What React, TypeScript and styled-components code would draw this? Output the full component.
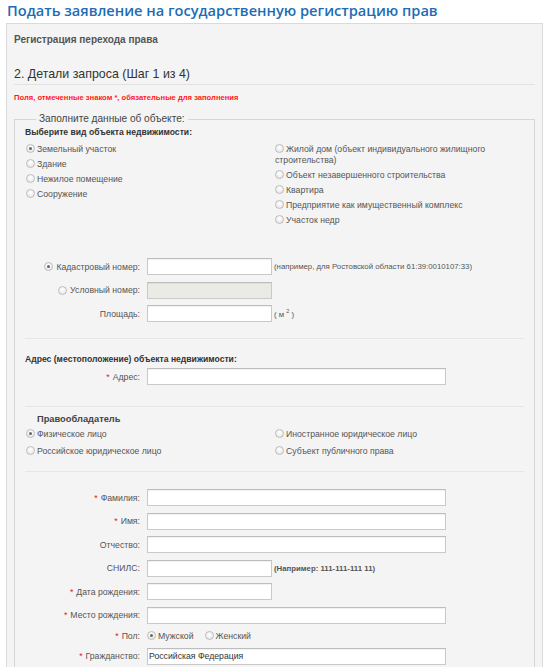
import React from 'react';
import styled, { createGlobalStyle } from 'styled-components';

const GlobalStyle = createGlobalStyle`
  html, body {
    margin: 0;
    padding: 0;
    background: #ffffff;
  }
  body {
    font-family: "Liberation Sans", Arial, sans-serif;
    color: #555;
  }
`;

const Page = styled.div`
  width: 550px;
  height: 667px;
  overflow: hidden;
`;

const Title = styled.h1`
  margin: 0;
  padding: 0 0 0 7px;
  height: 23px;
  font-family: "Open Sans", "Liberation Sans", sans-serif;
  font-weight: 600;
  font-size: 14.6px;
  line-height: 20px;
  color: #1d6cb5;
  white-space: nowrap;
`;

const Panel = styled.div`
  width: 521px;
  margin-left: 6px;
  padding: 9px 7px 0 7px;
  background: #f4f4f4;
  border: 1px solid #dadada;
`;

const PanelCaption = styled.div`
  font-size: 10px;
  font-weight: bold;
  line-height: 13px;
  color: #555;
`;

const StepTitle = styled.h2`
  margin: 20px 0 0;
  padding-bottom: 2px;
  font-size: 12.4px;
  font-weight: normal;
  line-height: 16px;
  color: #333;
  border-bottom: 1px solid #e2e2e2;
`;

const RequiredNote = styled.div`
  margin-top: 8px;
  font-size: 7.6px;
  font-weight: bold;
  line-height: 10px;
  color: #ff1a1a;
`;

const Fieldset = styled.fieldset`
  margin: 10px 0 0;
  padding: 0 10px 20px 10px;
  border: 1px solid #d6d6d6;
  min-width: 0;
`;

const Legend = styled.legend`
  margin-left: 11px;
  padding: 0 3px;
  font-size: 10.1px;
  line-height: 12px;
  color: #444;
`;

const SubHeading = styled.div<{ $top: number }>`
  margin-top: ${p => p.$top}px;
  font-size: 8.6px;
  font-weight: bold;
  line-height: 13px;
  color: #333;
`;

const OwnerHeading = styled.div`
  margin-top: 6px;
  padding-left: 12px;
  font-size: 9.3px;
  font-weight: bold;
  line-height: 13px;
  color: #444;
`;

const RadioGrid = styled.div<{ $step: number; $top: number }>`
  display: grid;
  grid-template-columns: 249px 1fr;
  margin-top: ${p => p.$top}px;
  padding-left: 1px;
  & > div {
    display: flex;
    flex-direction: column;
    gap: ${p => p.$step}px;
  }
`;

const RadioLabel = styled.label`
  display: block;
  font-size: 8.7px;
  line-height: 11px;
  color: #555;
`;

const RadioDot = styled.span<{ $checked?: boolean }>`
  display: inline-block;
  vertical-align: -1px;
  box-sizing: border-box;
  width: 9px;
  height: 9px;
  margin-right: 2px;
  border-radius: 50%;
  border: 1px solid #bcbcbc;
  background: radial-gradient(circle at 50% 35%, #ffffff 0%, #e2e2e2 100%);
  position: relative;
  &::after {
    content: '';
    display: ${p => (p.$checked ? 'block' : 'none')};
    position: absolute;
    left: 2px;
    top: 2px;
    width: 3px;
    height: 3px;
    border-radius: 50%;
    background: #666;
  }
`;

const FormRows = styled.div<{ $top: number }>`
  display: flex;
  flex-direction: column;
  gap: 6.5px;
  margin-top: ${p => p.$top}px;
`;

const Row = styled.div<{ $height?: number }>`
  display: grid;
  grid-template-columns: 115px auto 1fr;
  column-gap: 7px;
  align-items: center;
  height: ${p => p.$height ?? 17}px;
`;

const Label = styled.div`
  display: flex;
  justify-content: flex-end;
  align-items: center;
  font-size: 8.7px;
  color: #555;
  white-space: nowrap;
  & > span:first-child {
    margin-right: 3px;
  }
`;

const Star = styled.span`
  color: #e52424;
  margin-right: 3px;
`;

const Input = styled.input<{ $wide?: boolean }>`
  box-sizing: border-box;
  width: ${p => (p.$wide ? 299 : 125)}px;
  height: 17px;
  margin: 0;
  padding: 0 1px;
  border: 1px solid #c9c9c9;
  border-top-color: #bdbdbd;
  box-shadow: inset 0 1px 1px rgba(0, 0, 0, 0.06);
  background: #fff;
  font-family: "Liberation Sans", Arial, sans-serif;
  font-size: 8.7px;
  color: #333;
  outline: none;
  &:disabled {
    background: #ebebe6;
  }
`;

const Hint = styled.span<{ $bold?: boolean }>`
  margin-left: -5px;
  font-size: 7.8px;
  font-weight: ${p => (p.$bold ? 'bold' : 'normal')};
  color: #555;
  white-space: nowrap;
`;

const Sup = styled.sup`
  font-size: 5.5px;
`;

const Divider = styled.hr<{ $top: number }>`
  margin: ${p => p.$top}px 0 0 0;
  border: 0;
  border-top: 1px solid #e6e6e6;
`;

const InlineRadios = styled.div`
  display: flex;
  gap: 11px;
  font-size: 8.7px;
  color: #555;
`;

const InlineRadio = styled.span`
  display: inline-flex;
  align-items: center;
`;

const Radio = ({ checked, children }: { checked?: boolean; children: React.ReactNode }) => (
  <RadioLabel>
    <RadioDot $checked={checked} />
    {children}
  </RadioLabel>
);

const Field = ({
  label,
  required,
  wide,
  value,
  hint,
  boldHint,
  disabled,
  radio,
}: {
  label: string;
  required?: boolean;
  wide?: boolean;
  value?: string;
  hint?: React.ReactNode;
  boldHint?: boolean;
  disabled?: boolean;
  radio?: 'on' | 'off';
}) => (
  <Row>
    <Label>
      {radio && <RadioDot $checked={radio === 'on'} />}
      {required && <Star>*</Star>}
      {label}
    </Label>
    <Input $wide={wide} disabled={disabled} defaultValue={value} />
    {hint ? <Hint $bold={boldHint}>{hint}</Hint> : <span />}
  </Row>
);

export default function App() {
  return (
    <>
      <GlobalStyle />
      <Page>
        <Title>Подать заявление на государственную регистрацию прав</Title>
        <Panel>
          <PanelCaption>Регистрация перехода права</PanelCaption>
          <StepTitle>2. Детали запроса (Шаг 1 из 4)</StepTitle>
          <RequiredNote>Поля, отмеченные знаком *, обязательные для заполнения</RequiredNote>

          <Fieldset>
            <Legend>Заполните данные об объекте:</Legend>
            <SubHeading $top={1}>Выберите вид объекта недвижимости:</SubHeading>
            <RadioGrid $step={4} $top={5}>
              <div>
                <Radio checked>Земельный участок</Radio>
                <Radio>Здание</Radio>
                <Radio>Нежилое помещение</Radio>
                <Radio>Сооружение</Radio>
              </div>
              <div>
                <Radio>Жилой дом (объект индивидуального жилищного строительства)</Radio>
                <Radio>Объект незавершенного строительства</Radio>
                <Radio>Квартира</Radio>
                <Radio>Предприятие как имущественный комплекс</Radio>
                <Radio>Участок недр</Radio>
              </div>
            </RadioGrid>

            <FormRows $top={32}>
              <Field
                radio="on"
                label="Кадастровый номер:"
                hint="(например, для Ростовской области 61:39:0010107:33)"
              />
              <Field radio="off" label="Условный номер:" disabled />
              <Field
                label="Площадь:"
                hint={
                  <>
                    ( м <Sup>2</Sup> )
                  </>
                }
              />
            </FormRows>

            <Divider $top={16} />

            <SubHeading $top={14}>Адрес (местоположение) объекта недвижимости:</SubHeading>
            <FormRows $top={2}>
              <Field required wide label="Адрес:" />
            </FormRows>

            <Divider $top={21} />

            <OwnerHeading>Правообладатель</OwnerHeading>
            <RadioGrid $step={6} $top={3}>
              <div>
                <Radio checked>Физическое лицо</Radio>
                <Radio>Российское юридическое лицо</Radio>
              </div>
              <div>
                <Radio>Иностранное юридическое лицо</Radio>
                <Radio>Субъект публичного права</Radio>
              </div>
            </RadioGrid>

            <Divider $top={14} />

            <FormRows $top={17}>
              <Field required wide label="Фамилия:" />
              <Field required wide label="Имя:" />
              <Field wide label="Отчество:" />
              <Field label="СНИЛС:" hint="(Например: 111-111-111 11)" boldHint />
              <Field required label="Дата рождения:" />
              <Field required wide label="Место рождения:" />
              <Row $height={11}>
                <Label>
                  <Star>*</Star>Пол:
                </Label>
                <InlineRadios>
                  <InlineRadio>
                    <RadioDot $checked />
                    Мужской
                  </InlineRadio>
                  <InlineRadio>
                    <RadioDot />
                    Женский
                  </InlineRadio>
                </InlineRadios>
                <span />
              </Row>
              <Field required wide label="Гражданство:" value="Российская Федерация" />
            </FormRows>
          </Fieldset>
        </Panel>
      </Page>
    </>
  );
}
